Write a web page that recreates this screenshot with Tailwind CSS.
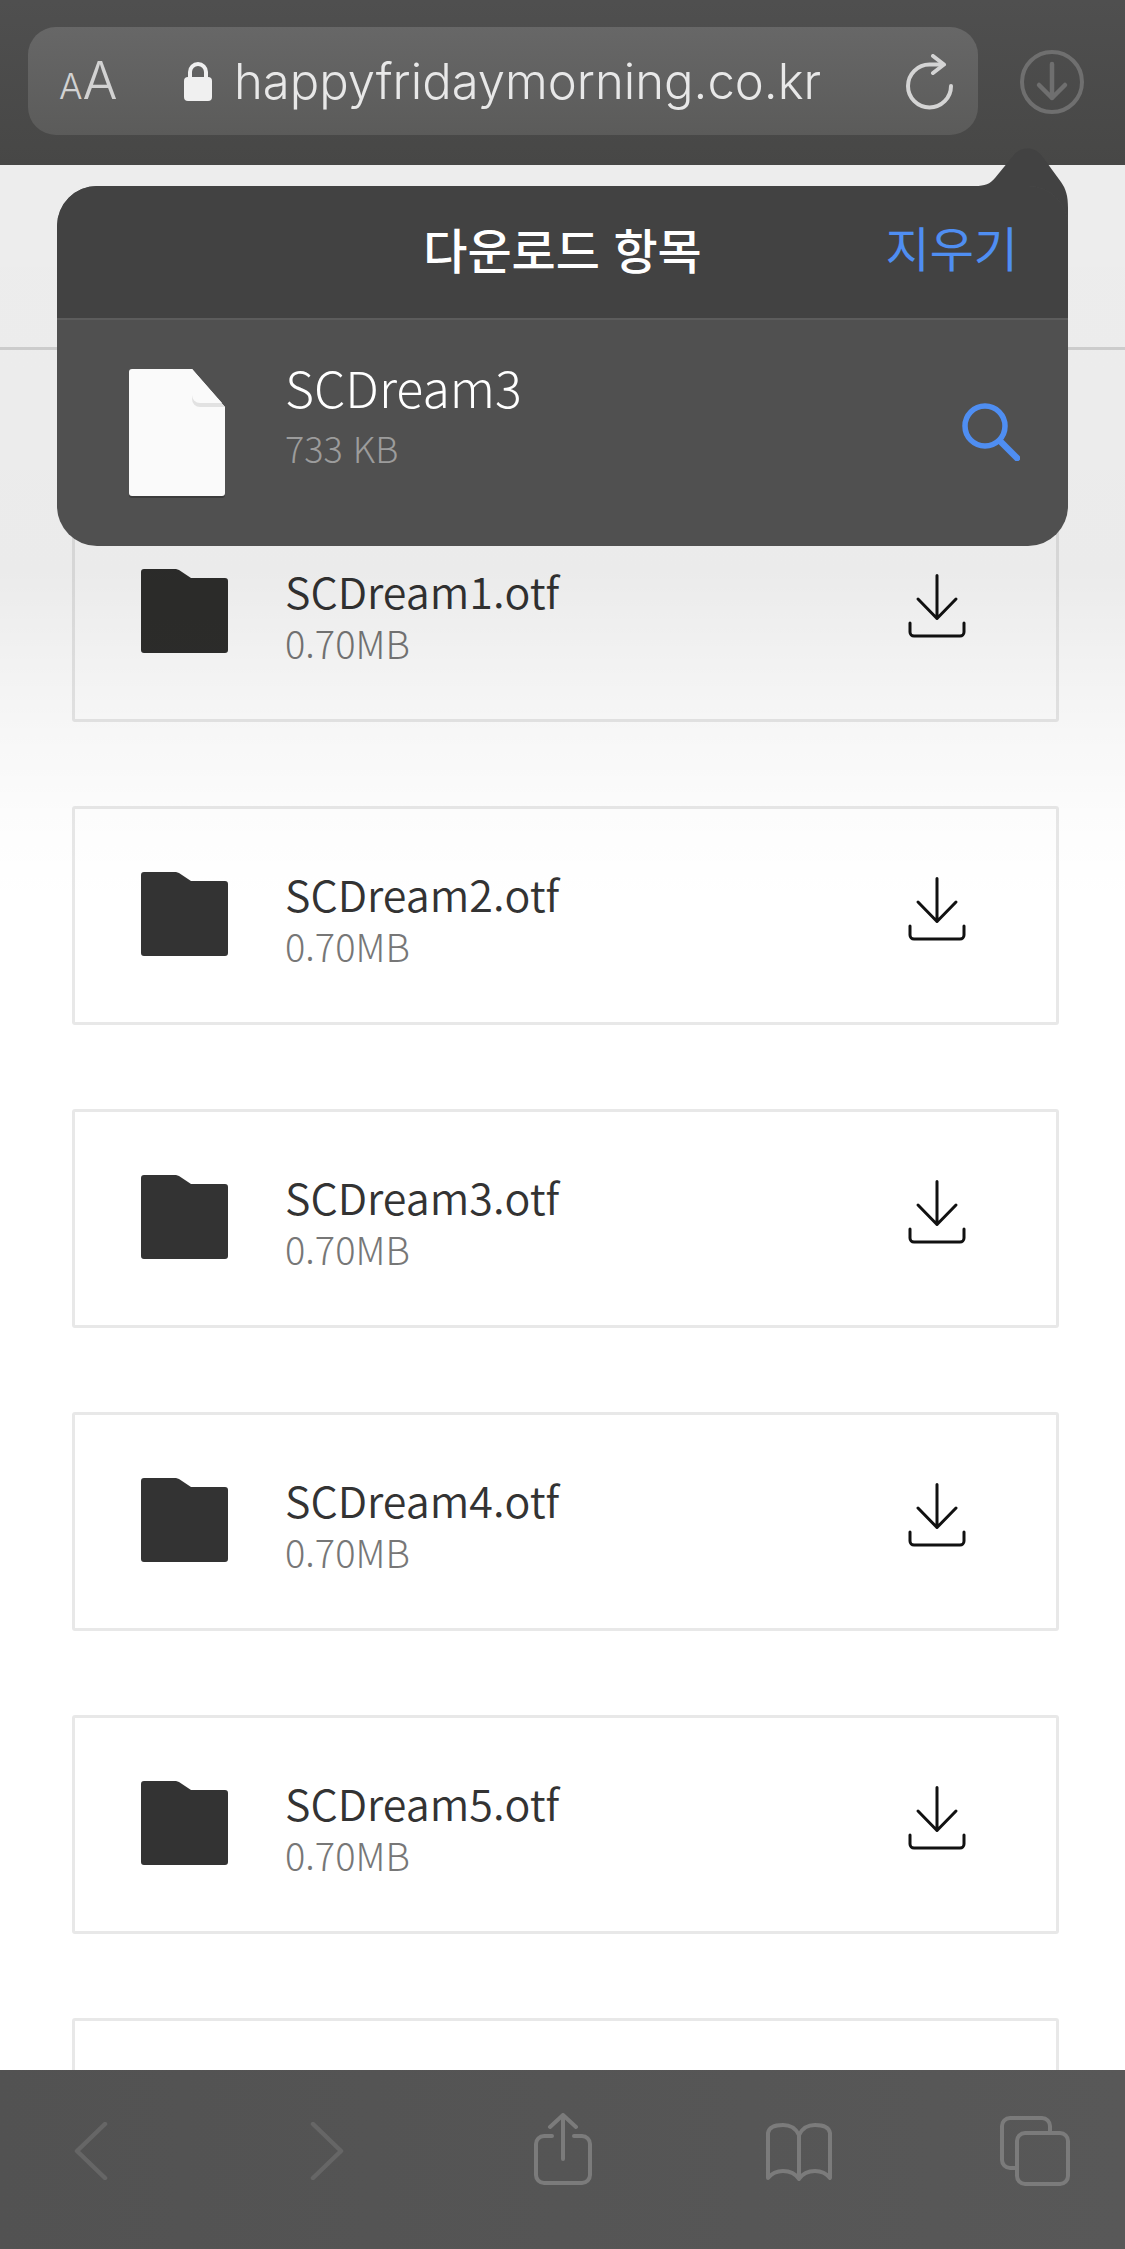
<!DOCTYPE html>
<html lang="ko">
<head>
  <meta charset="UTF-8" />
  <meta name="viewport" content="width=device-width, initial-scale=1.0" />
  <title>SCDream</title>
  <script src="https://cdn.jsdelivr.net/npm/@tailwindcss/browser@4"></script>
</head>
<body class="bg-white">
<div class="relative w-[1125px] h-[2249px] overflow-hidden flex flex-col font-['Noto_Sans_CJK_KR',sans-serif]">

  <!-- top bar -->
  <header class="h-[165px] shrink-0 bg-gradient-to-b from-[#4f4f4f] to-[#474746] pt-[27px] pl-[28px] flex items-start font-['Inter',sans-serif]">
    <div class="w-[950px] h-[108px] rounded-[28px] bg-gradient-to-b from-[#676767] to-[#5b5b5a] flex items-center relative">
      <div class="ml-[31px] w-[60px] flex items-baseline text-[#d2d2d2] font-[350] leading-none">
        <span class="text-[35px]">A</span><span class="text-[52px]">A</span>
      </div>
      <svg class="ml-[64px] w-[30px] h-[40px]" viewBox="0 0 30 40"><path d="M7 17V11a8 8 0 0 1 16 0v6" fill="none" stroke="#f0f0f0" stroke-width="4"/><rect x="1" y="16" width="28" height="24" rx="4" fill="#f0f0f0"/></svg>
      <span class="ml-[21px] text-[49px] leading-none text-[#e8e8e8] font-[350] whitespace-nowrap">happyfridaymorning.co.kr</span>
      <svg class="absolute left-[878px] top-[27px] w-[48px] h-[56px]" viewBox="0 0 48 56" fill="none" stroke="#d4d4d4" stroke-width="4" stroke-linecap="round" stroke-linejoin="round"><path d="M45 32a21.5 21.5 0 1 1-21.5-21.5H36"/><path d="M27 2l11 8.500-11 8.500"/></svg>
    </div>
    <svg class="ml-[42px] mt-[22px] w-[64px] h-[66px]" viewBox="0 0 64 66" fill="none" stroke="#6f6f6f" stroke-linecap="round" stroke-linejoin="round"><circle cx="32" cy="33" r="30" stroke-width="4"/><path d="M32 15v34M19 36l13 13 13-13" stroke-width="4.5"/></svg>
  </header>

  <!-- page -->
  <main class="flex-1 min-h-0 overflow-hidden">
    <div class="h-[185px] border-b-[3px] border-[#dcdcdc]"></div>
    <div class="pl-[72px] pr-[66px] pt-[153px] flex flex-col gap-[84px]">

      <div class="h-[219px] border-[3px] border-[#e8e8e8] rounded-[3px] flex items-center">
        <svg class="ml-[66px] mb-[3px] w-[87px] h-[84px]" viewBox="0 0 87 84"><path d="M3 0h32l3 1 12 8h34a3 3 0 0 1 3 3v69a3 3 0 0 1-3 3H3a3 3 0 0 1-3-3V3a3 3 0 0 1 3-3z" fill="#2e2e2c"/></svg>
        <div class="ml-[57px] mt-[2px]">
          <div class="text-[43px] leading-[54px] font-[350] text-[#333]">SCDream1.otf</div>
          <div class="mt-[4px] text-[38px] leading-[44px] font-light text-[#777]">0.70MB</div>
        </div>
        <svg class="ml-auto mr-[90px] mb-[14px] w-[58px] h-[64px]" viewBox="0 0 58 64" fill="none" stroke="#111" stroke-width="3" stroke-linecap="round" stroke-linejoin="round"><path d="M29 1.500v43M10 25l19 19.500L48 25"/><path d="M2 49v9a4 4 0 0 0 4 4h46a4 4 0 0 0 4-4v-9"/></svg>
      </div>

      <div class="h-[219px] border-[3px] border-[#e8e8e8] rounded-[3px] flex items-center">
        <svg class="ml-[66px] mb-[3px] w-[87px] h-[84px]" viewBox="0 0 87 84"><path d="M3 0h32l3 1 12 8h34a3 3 0 0 1 3 3v69a3 3 0 0 1-3 3H3a3 3 0 0 1-3-3V3a3 3 0 0 1 3-3z" fill="#333"/></svg>
        <div class="ml-[57px] mt-[2px]">
          <div class="text-[43px] leading-[54px] font-[350] text-[#333]">SCDream2.otf</div>
          <div class="mt-[4px] text-[38px] leading-[44px] font-light text-[#777]">0.70MB</div>
        </div>
        <svg class="ml-auto mr-[90px] mb-[14px] w-[58px] h-[64px]" viewBox="0 0 58 64" fill="none" stroke="#111" stroke-width="3" stroke-linecap="round" stroke-linejoin="round"><path d="M29 1.500v43M10 25l19 19.500L48 25"/><path d="M2 49v9a4 4 0 0 0 4 4h46a4 4 0 0 0 4-4v-9"/></svg>
      </div>

      <div class="h-[219px] border-[3px] border-[#e8e8e8] rounded-[3px] flex items-center">
        <svg class="ml-[66px] mb-[3px] w-[87px] h-[84px]" viewBox="0 0 87 84"><path d="M3 0h32l3 1 12 8h34a3 3 0 0 1 3 3v69a3 3 0 0 1-3 3H3a3 3 0 0 1-3-3V3a3 3 0 0 1 3-3z" fill="#333"/></svg>
        <div class="ml-[57px] mt-[2px]">
          <div class="text-[43px] leading-[54px] font-[350] text-[#333]">SCDream3.otf</div>
          <div class="mt-[4px] text-[38px] leading-[44px] font-light text-[#777]">0.70MB</div>
        </div>
        <svg class="ml-auto mr-[90px] mb-[14px] w-[58px] h-[64px]" viewBox="0 0 58 64" fill="none" stroke="#111" stroke-width="3" stroke-linecap="round" stroke-linejoin="round"><path d="M29 1.500v43M10 25l19 19.500L48 25"/><path d="M2 49v9a4 4 0 0 0 4 4h46a4 4 0 0 0 4-4v-9"/></svg>
      </div>

      <div class="h-[219px] border-[3px] border-[#e8e8e8] rounded-[3px] flex items-center">
        <svg class="ml-[66px] mb-[3px] w-[87px] h-[84px]" viewBox="0 0 87 84"><path d="M3 0h32l3 1 12 8h34a3 3 0 0 1 3 3v69a3 3 0 0 1-3 3H3a3 3 0 0 1-3-3V3a3 3 0 0 1 3-3z" fill="#333"/></svg>
        <div class="ml-[57px] mt-[2px]">
          <div class="text-[43px] leading-[54px] font-[350] text-[#333]">SCDream4.otf</div>
          <div class="mt-[4px] text-[38px] leading-[44px] font-light text-[#777]">0.70MB</div>
        </div>
        <svg class="ml-auto mr-[90px] mb-[14px] w-[58px] h-[64px]" viewBox="0 0 58 64" fill="none" stroke="#111" stroke-width="3" stroke-linecap="round" stroke-linejoin="round"><path d="M29 1.500v43M10 25l19 19.500L48 25"/><path d="M2 49v9a4 4 0 0 0 4 4h46a4 4 0 0 0 4-4v-9"/></svg>
      </div>

      <div class="h-[219px] border-[3px] border-[#e8e8e8] rounded-[3px] flex items-center">
        <svg class="ml-[66px] mb-[3px] w-[87px] h-[84px]" viewBox="0 0 87 84"><path d="M3 0h32l3 1 12 8h34a3 3 0 0 1 3 3v69a3 3 0 0 1-3 3H3a3 3 0 0 1-3-3V3a3 3 0 0 1 3-3z" fill="#333"/></svg>
        <div class="ml-[57px] mt-[2px]">
          <div class="text-[43px] leading-[54px] font-[350] text-[#333]">SCDream5.otf</div>
          <div class="mt-[4px] text-[38px] leading-[44px] font-light text-[#777]">0.70MB</div>
        </div>
        <svg class="ml-auto mr-[90px] mb-[14px] w-[58px] h-[64px]" viewBox="0 0 58 64" fill="none" stroke="#111" stroke-width="3" stroke-linecap="round" stroke-linejoin="round"><path d="M29 1.500v43M10 25l19 19.500L48 25"/><path d="M2 49v9a4 4 0 0 0 4 4h46a4 4 0 0 0 4-4v-9"/></svg>
      </div>

      <div class="h-[219px] border-[3px] border-[#e8e8e8] rounded-[3px]"></div>
    </div>
  </main>

  <!-- bottom bar -->
  <footer class="h-[179px] shrink-0 bg-gradient-to-r from-[#525252] to-[#585858] relative z-10 flex items-start">
    <svg class="ml-[74px] mt-[52px] w-[34px] h-[58px]" viewBox="0 0 34 58" fill="none" stroke="#666" stroke-width="4.5" stroke-linecap="round" stroke-linejoin="round"><path d="M31 2L3 29l28 27"/></svg>
    <svg class="ml-[202px] mt-[52px] w-[34px] h-[58px]" viewBox="0 0 34 58" fill="none" stroke="#666" stroke-width="4.5" stroke-linecap="round" stroke-linejoin="round"><path d="M3 2l28 27L3 56"/></svg>
    <svg class="ml-[190px] mt-[43px] w-[58px] h-[72px]" viewBox="0 0 58 72" fill="none" stroke="#7b7b7b" stroke-width="4" stroke-linecap="round" stroke-linejoin="round"><path d="M29 2v44M16 14L29 2l13 12"/><path d="M18 23H10a8 8 0 0 0-8 8v31a8 8 0 0 0 8 8h38a8 8 0 0 0 8-8V31a8 8 0 0 0-8-8h-8"/></svg>
    <svg class="ml-[174px] mt-[53px] w-[66px] h-[58px]" viewBox="0 0 66 58" fill="none" stroke="#7b7b7b" stroke-width="4" stroke-linecap="round" stroke-linejoin="round"><path d="M33 12C29 4 24 2 17 2 9 2 3 4 2 10v45c4-5 9-7 15-7 7 0 12 2 16 8 4-6 9-8 16-8 6 0 11 2 15 7V10c-1-6-7-8-15-8-7 0-12 2-16 10zM33 12v44"/></svg>
    <svg class="ml-[168px] mt-[46px] w-[70px] h-[70px]" viewBox="0 0 70 70" fill="none" stroke="#7b7b7b" stroke-width="4" stroke-linejoin="round"><path d="M16 52H10a8 8 0 0 1-8-8V10a8 8 0 0 1 8-8h32a8 8 0 0 1 8 8v6"/><rect x="17" y="17" width="51" height="51" rx="8"/></svg>
  </footer>

  <!-- dim behind popover -->
  <div class="absolute left-0 right-0 top-[165px] h-[740px] pointer-events-none bg-[linear-gradient(to_bottom,rgba(0,0,0,0.07)_0%,rgba(0,0,0,0.08)_55%,rgba(0,0,0,0.035)_75%,rgba(0,0,0,0.01)_88%,rgba(0,0,0,0)_100%)]"></div>

  <!-- downloads popover -->
  <div class="absolute left-[57px] top-[186px] w-[1011px] h-[360px] z-20">
    <svg class="absolute left-[918px] top-[-38px] w-[93px] h-[80px]" viewBox="0 0 93 80"><path d="M0 38C10 38 15 36 20 30L38 8C45-2 60-2 67 8L86 34C91 41 93 48 93 60V80H0z" fill="#424242"/></svg>
    <div class="relative h-full rounded-[40px] overflow-hidden bg-[#505050] flex flex-col">
      <div class="h-[134px] shrink-0 bg-[#424242] border-b-2 border-[#5c5c5c] relative flex items-center justify-center">
        <span class="mb-[8px] text-[48px] font-medium leading-none text-white">다운로드 항목</span>
        <span class="absolute right-[50px] top-[36px] text-[48px] leading-none text-[#4f8ef2]">지우기</span>
      </div>
      <div class="flex-1 flex items-center pl-[72px]">
        <svg class="w-[97px] h-[130px] mt-[2px]" viewBox="0 0 97 130"><path d="M3 1h58l35 38v85a3 3 0 0 1-3 3H3a3 3 0 0 1-3-3V4a3 3 0 0 1 3-3z" fill="#3c3c3c" transform="translate(0 2)"/><path d="M3 0h60l33 38v86a3 3 0 0 1-3 3H3a3 3 0 0 1-3-3V3a3 3 0 0 1 3-3z" fill="#fafafa"/><path d="M63 0v30a8 8 0 0 0 8 8h25z" fill="#e2e2e2"/><path d="M63 0v26a8 8 0 0 0 8 8h22z" fill="#fafafa"/></svg>
        <div class="ml-[59px] mb-[41px]">
          <div class="text-[50px] leading-[60px] font-light text-white">SCDream3</div>
          <div class="mt-[9px] text-[36px] leading-[44px] font-light text-[#9c9c9c]">733 KB</div>
        </div>
        <svg class="ml-auto mr-[48px] mb-[2px] w-[58px] h-[58px]" viewBox="0 0 58 58" fill="none" stroke="#4f8ef2" stroke-width="5.5" stroke-linecap="round"><circle cx="23" cy="23" r="20"/><path d="M38 38l17 17" stroke-width="6.5"/></svg>
      </div>
    </div>
  </div>
</div>
</body>
</html>
